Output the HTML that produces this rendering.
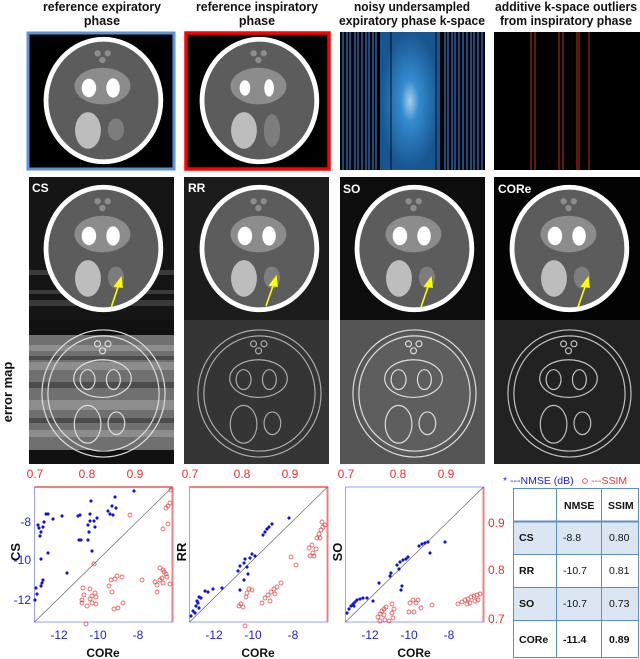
<!DOCTYPE html>
<html><head><meta charset="utf-8"><style>
html,body{margin:0;padding:0;background:#fff;}
svg{display:block;font-family:"Liberation Sans",sans-serif;}
</style></head><body>
<svg width="640" height="659" viewBox="0 0 640 659" xmlns="http://www.w3.org/2000/svg">
<defs>
<symbol id="ph" viewBox="0 0 147 141">
<ellipse cx="76" cy="70" rx="62" ry="66" fill="#fff"/>
<ellipse cx="76" cy="70" rx="57" ry="61" fill="#5c5c5c"/>
<ellipse cx="75" cy="55" rx="29" ry="19" fill="#8c8c8c"/>
<ellipse cx="61" cy="57" rx="7.5" ry="9.6" fill="#fff"/>
<ellipse cx="86" cy="57" rx="7" ry="10" fill="#fff"/>
<circle cx="70" cy="21" r="3.3" fill="#8c8c8c"/><circle cx="80.5" cy="21" r="3.3" fill="#8c8c8c"/><circle cx="75" cy="28" r="3.3" fill="#8c8c8c"/>
<ellipse cx="60" cy="101" rx="13.4" ry="19" fill="#bdbdbd"/>
<ellipse cx="89" cy="100" rx="8.4" ry="11.4" fill="#7d7d7d"/>
</symbol>
<symbol id="ph2" viewBox="0 0 147 141">
<ellipse cx="76" cy="70" rx="62" ry="66" fill="#fff"/>
<ellipse cx="76" cy="70" rx="57" ry="61" fill="#5c5c5c"/>
<ellipse cx="75" cy="55" rx="29" ry="19" fill="#8c8c8c"/>
<ellipse cx="61" cy="57" rx="5.5" ry="8" fill="#fff"/>
<ellipse cx="86" cy="57" rx="5" ry="9" fill="#fff"/>
<circle cx="70" cy="21" r="3.3" fill="#8c8c8c"/><circle cx="80.5" cy="21" r="3.3" fill="#8c8c8c"/><circle cx="75" cy="28" r="3.3" fill="#8c8c8c"/>
<ellipse cx="60" cy="101" rx="13.4" ry="19" fill="#bdbdbd"/>
<ellipse cx="89" cy="101" rx="8.4" ry="17" fill="#7d7d7d"/>
</symbol>
<symbol id="err" viewBox="0 0 147 141" fill="none" stroke="#ddd" stroke-width="1.2">
<ellipse cx="76" cy="72" rx="62" ry="64"/>
<ellipse cx="76" cy="72" rx="56" ry="58"/>
<ellipse cx="75" cy="57" rx="29" ry="19"/>
<ellipse cx="60" cy="58" rx="7.5" ry="10"/>
<ellipse cx="86" cy="58" rx="7" ry="10"/>
<circle cx="70" cy="22" r="3"/><circle cx="80.5" cy="22" r="3"/><circle cx="75" cy="29" r="3"/>
<ellipse cx="60" cy="103" rx="13.4" ry="19"/>
<ellipse cx="89" cy="102" rx="8.4" ry="11.4"/>
</symbol>
<radialGradient id="kc" cx="0.5" cy="0.5" r="0.5"><stop offset="0" stop-color="#bfe4ff"/><stop offset="0.3" stop-color="#3a9be8"/><stop offset="1" stop-color="#1a5fa0"/></radialGradient>
<path id="st" d="M-1.6 0H1.6M0 -1.6V1.6M-1.1 -1.1L1.1 1.1M-1.1 1.1L1.1 -1.1" stroke="#1010e0" stroke-width="1"/>
<circle id="ci" r="2" fill="none" stroke="#f03030" stroke-width="0.7"/>
</defs>

<g font-weight="bold" font-size="12.5" text-anchor="middle" fill="#111">
<text x="102" y="11" textLength="118" lengthAdjust="spacingAndGlyphs">reference expiratory</text>
<text x="102" y="25">phase</text>
<text x="257" y="11" textLength="122" lengthAdjust="spacingAndGlyphs">reference inspiratory</text>
<text x="257" y="25">phase</text>
<text x="412" y="11" textLength="116" lengthAdjust="spacingAndGlyphs">noisy undersampled</text>
<text x="412" y="25" textLength="146" lengthAdjust="spacingAndGlyphs">expiratory phase k-space</text>
<text x="566" y="11" textLength="142" lengthAdjust="spacingAndGlyphs">additive k-space outliers</text>
<text x="566" y="25" textLength="132" lengthAdjust="spacingAndGlyphs">from inspiratory phase</text>
</g>

<rect x="28" y="33" width="146" height="136" fill="#000" stroke="#5a93d8" stroke-width="3"/>
<use href="#ph" x="28" y="33" width="146" height="136"/>
<rect x="186" y="33" width="143" height="136" fill="#000" stroke="#f00" stroke-width="3.5"/>
<use href="#ph2" x="184" y="33" width="146" height="136"/>
<rect x="340" y="32" width="145" height="138" fill="#000"/>
<rect x="380" y="32" width="60" height="138" fill="url(#kc)" opacity="0.9"/>
<g stroke="#2a7fd0" stroke-width="1.2">
<line x1="343" y1="32" x2="343" y2="170"/><line x1="347" y1="32" x2="347" y2="170"/><line x1="350" y1="32" x2="350" y2="170"/><line x1="355" y1="32" x2="355" y2="170"/><line x1="358" y1="32" x2="358" y2="170"/><line x1="362" y1="32" x2="362" y2="170"/><line x1="366" y1="32" x2="366" y2="170"/><line x1="369" y1="32" x2="369" y2="170"/><line x1="373" y1="32" x2="373" y2="170"/><line x1="376" y1="32" x2="376" y2="170"/><line x1="445" y1="32" x2="445" y2="170"/><line x1="448" y1="32" x2="448" y2="170"/><line x1="452" y1="32" x2="452" y2="170"/><line x1="455" y1="32" x2="455" y2="170"/><line x1="459" y1="32" x2="459" y2="170"/><line x1="463" y1="32" x2="463" y2="170"/><line x1="467" y1="32" x2="467" y2="170"/><line x1="471" y1="32" x2="471" y2="170"/><line x1="474" y1="32" x2="474" y2="170"/><line x1="478" y1="32" x2="478" y2="170"/><line x1="482" y1="32" x2="482" y2="170"/>
</g>
<g stroke="#000" stroke-width="0.8"><line x1="391" y1="32" x2="391" y2="170"/><line x1="436" y1="32" x2="436" y2="170"/><line x1="441" y1="32" x2="441" y2="170"/><line x1="345" y1="32" x2="345" y2="170"/><line x1="465" y1="32" x2="465" y2="170"/></g>
<rect x="494" y="32" width="146" height="138" fill="#000"/>
<g stroke="#c0301c" stroke-width="1"><line x1="531" y1="32" x2="531" y2="170"/><line x1="535" y1="32" x2="535" y2="170"/><line x1="559" y1="32" x2="559" y2="170"/><line x1="563" y1="32" x2="563" y2="170"/><line x1="577" y1="32" x2="577" y2="170"/><line x1="579" y1="32" x2="579" y2="170"/><line x1="589" y1="32" x2="589" y2="170"/></g>

<rect x="29" y="177" width="145" height="143" fill="#151515"/>
<g fill="#3a3a3a"><rect x="29" y="270" width="145" height="5"/><rect x="29" y="290" width="145" height="4"/><rect x="29" y="300" width="145" height="6"/></g>
<use href="#ph" x="28" y="181" width="146" height="136"/>
<rect x="184" y="177" width="145" height="143" fill="#1c1c1c"/>
<use href="#ph" x="184" y="181" width="146" height="136"/>
<rect x="340" y="177" width="145" height="143" fill="#0e0e0e"/>
<use href="#ph" x="339" y="181" width="146" height="136"/>
<rect x="494" y="177" width="146" height="143" fill="#030303"/>
<use href="#ph" x="494" y="181" width="146" height="136"/>
<g font-weight="bold" font-size="12" fill="#fff">
<text x="32" y="192">CS</text><text x="188" y="192">RR</text><text x="343" y="193">SO</text><text x="498" y="193">CORe</text>
</g>
<g stroke="#ffff00" stroke-width="1.6" fill="#ffff00">
<line x1="111" y1="308" x2="119" y2="284"/><path d="M121 278 L115 286 L122 287Z"/>
<line x1="266" y1="306" x2="274" y2="283"/><path d="M276 277 L270 285 L277 286Z"/>
<line x1="421" y1="307" x2="429" y2="284"/><path d="M431 278 L425 286 L432 287Z"/>
<line x1="578" y1="307" x2="586" y2="284"/><path d="M588 278 L582 286 L589 287Z"/>
</g>

<rect x="29" y="320" width="145" height="144" fill="#111"/>
<rect x="29" y="335" width="145" height="115" fill="#707070"/>
<g fill="#9a9a9a" opacity="0.7"><rect x="29" y="345" width="145" height="6"/><rect x="29" y="362" width="145" height="8"/><rect x="29" y="400" width="145" height="10"/><rect x="29" y="430" width="145" height="7"/></g>
<g fill="#444" opacity="0.8"><rect x="29" y="356" width="145" height="4"/><rect x="29" y="382" width="145" height="6"/><rect x="29" y="418" width="145" height="5"/></g>
<use href="#err" x="28" y="322" width="146" height="140"/>
<rect x="184" y="320" width="145" height="144" fill="#353535"/>
<use href="#err" x="184" y="322" width="146" height="140" opacity="0.7"/>
<rect x="340" y="320" width="145" height="144" fill="#555"/>
<ellipse cx="414" cy="394" rx="57" ry="60" fill="#5e5e5e"/>
<use href="#err" x="339" y="322" width="146" height="140"/>
<rect x="494" y="320" width="146" height="144" fill="#222"/>
<use href="#err" x="494" y="322" width="146" height="140" opacity="0.85"/>
<text transform="translate(12,392) rotate(-90)" text-anchor="middle" font-size="13" font-weight="bold" fill="#111">error map</text>

<g font-size="12">
<rect x="34.5" y="487" width="138" height="135" fill="none" stroke="#9aa0ff" stroke-width="1"/>
<line x1="34.5" y1="487" x2="172.5" y2="487" stroke="#f08080" stroke-width="2"/>
<line x1="172.5" y1="487" x2="172.5" y2="622" stroke="#f08080" stroke-width="2"/>
<line x1="34.5" y1="622" x2="172.5" y2="487" stroke="#555" stroke-width="0.6"/>
<g fill="#f03030" text-anchor="middle"><text x="35" y="478">0.7</text><text x="87" y="478">0.8</text><text x="135" y="478">0.9</text></g>
<g fill="#2020e0" text-anchor="end"><text x="31" y="526">-8</text><text x="31" y="564">-10</text><text x="31" y="604">-12</text></g>
<g fill="#2020e0" text-anchor="middle"><text x="59" y="639">-12</text><text x="98" y="639">-10</text><text x="138" y="639">-8</text></g>
<text x="103" y="657" text-anchor="middle" font-weight="bold" fill="#111">CORe</text>
<text transform="translate(20,552) rotate(-90)" text-anchor="middle" font-weight="bold" font-size="13" fill="#111">CS</text>

<rect x="189.5" y="487" width="138" height="135" fill="none" stroke="#9aa0ff" stroke-width="1"/>
<line x1="189.5" y1="487" x2="327.5" y2="487" stroke="#f08080" stroke-width="2"/>
<line x1="327.5" y1="487" x2="327.5" y2="622" stroke="#f08080" stroke-width="2"/>
<line x1="189.5" y1="622" x2="327.5" y2="487" stroke="#555" stroke-width="0.6"/>
<g fill="#f03030" text-anchor="middle"><text x="190" y="478">0.7</text><text x="242" y="478">0.8</text><text x="290" y="478">0.9</text></g>
<g fill="#2020e0" text-anchor="middle"><text x="214" y="639">-12</text><text x="253" y="639">-10</text><text x="293" y="639">-8</text></g>
<text x="258" y="657" text-anchor="middle" font-weight="bold" fill="#111">CORe</text>
<text transform="translate(186,552) rotate(-90)" text-anchor="middle" font-weight="bold" font-size="13" fill="#111">RR</text>

<rect x="345.5" y="487" width="138" height="135" fill="none" stroke="#9aa0ff" stroke-width="1"/>
<line x1="483.5" y1="487" x2="483.5" y2="622" stroke="#f08080" stroke-width="2"/>
<line x1="345.5" y1="622" x2="483.5" y2="487" stroke="#555" stroke-width="0.6"/>
<g fill="#f03030" text-anchor="middle"><text x="346" y="478">0.7</text><text x="398" y="478">0.8</text><text x="446" y="478">0.9</text></g>
<g fill="#f03030"><text x="488" y="527">0.9</text><text x="488" y="574">0.8</text><text x="488" y="623">0.7</text></g>
<g fill="#2020e0" text-anchor="middle"><text x="370" y="639">-12</text><text x="409" y="639">-10</text><text x="449" y="639">-8</text></g>
<text x="414" y="657" text-anchor="middle" font-weight="bold" fill="#111">CORe</text>
<text transform="translate(342,552) rotate(-90)" text-anchor="middle" font-weight="bold" font-size="13" fill="#111">SO</text>
</g>

<g>
<use href="#st" x="39" y="528"/><use href="#st" x="41" y="532"/><use href="#st" x="43" y="527"/><use href="#st" x="40" y="536"/><use href="#st" x="44" y="522"/><use href="#st" x="38" y="525"/>
<use href="#st" x="36" y="588"/><use href="#st" x="37" y="594"/><use href="#st" x="35" y="600"/><use href="#st" x="42" y="583"/><use href="#st" x="43" y="580"/><use href="#st" x="41" y="586"/>
<use href="#st" x="46" y="514"/><use href="#st" x="48" y="514"/><use href="#st" x="53" y="519"/><use href="#st" x="62" y="516"/><use href="#st" x="41" y="559"/><use href="#st" x="48" y="553"/><use href="#st" x="67" y="573"/>
<use href="#st" x="78" y="516"/><use href="#st" x="80" y="515"/><use href="#st" x="90" y="514"/><use href="#st" x="91" y="501"/><use href="#st" x="88" y="525"/><use href="#st" x="90" y="521"/><use href="#st" x="94" y="521"/><use href="#st" x="97" y="518"/><use href="#st" x="89" y="532"/><use href="#st" x="88" y="540"/><use href="#st" x="79" y="540"/><use href="#st" x="81" y="540"/><use href="#st" x="92" y="551"/><use href="#st" x="95" y="527"/>
<use href="#st" x="108" y="511"/><use href="#st" x="110" y="514"/><use href="#st" x="112" y="506"/><use href="#st" x="113" y="515"/><use href="#st" x="116" y="508"/><use href="#st" x="115" y="497"/><use href="#st" x="134" y="491"/>
<use href="#ci" x="82" y="600"/><use href="#ci" x="84" y="595"/><use href="#ci" x="82" y="603"/><use href="#ci" x="90" y="599"/><use href="#ci" x="92" y="596"/><use href="#ci" x="96" y="597"/><use href="#ci" x="96" y="604"/><use href="#ci" x="92" y="603"/><use href="#ci" x="87" y="606"/><use href="#ci" x="83" y="588"/><use href="#ci" x="90" y="589"/><use href="#ci" x="95" y="593"/><use href="#ci" x="86" y="624"/>
<use href="#ci" x="111" y="580"/><use href="#ci" x="115" y="579"/><use href="#ci" x="117" y="576"/><use href="#ci" x="122" y="577"/><use href="#ci" x="123" y="603"/><use href="#ci" x="118" y="608"/><use href="#ci" x="114" y="609"/><use href="#ci" x="94" y="564"/><use href="#ci" x="109" y="586"/><use href="#ci" x="112" y="592"/><use href="#ci" x="142" y="580"/>
<use href="#ci" x="155" y="582"/><use href="#ci" x="157" y="585"/><use href="#ci" x="160" y="580"/><use href="#ci" x="162" y="578"/><use href="#ci" x="163" y="583"/><use href="#ci" x="167" y="577"/><use href="#ci" x="164" y="572"/><use href="#ci" x="166" y="574"/><use href="#ci" x="160" y="568"/><use href="#ci" x="163" y="570"/><use href="#ci" x="157" y="592"/><use href="#ci" x="170" y="584"/>
<use href="#ci" x="166" y="508"/><use href="#ci" x="168" y="506"/><use href="#ci" x="170" y="503"/><use href="#ci" x="168" y="524"/><use href="#ci" x="163" y="529"/><use href="#ci" x="171" y="490"/><use href="#ci" x="130" y="515"/>
</g>
<g>
<use href="#st" x="191" y="616"/><use href="#st" x="193" y="611"/><use href="#st" x="196" y="606"/><use href="#st" x="197" y="601"/><use href="#st" x="199" y="597"/><use href="#st" x="198" y="603"/><use href="#st" x="201" y="598"/><use href="#st" x="195" y="613"/><use href="#st" x="199" y="608"/><use href="#st" x="205" y="591"/><use href="#st" x="208" y="592"/><use href="#st" x="213" y="589"/><use href="#st" x="222" y="588"/>
<use href="#st" x="238" y="571"/><use href="#st" x="240" y="566"/><use href="#st" x="244" y="563"/><use href="#st" x="247" y="567"/><use href="#st" x="250" y="558"/><use href="#st" x="252" y="554"/><use href="#st" x="245" y="559"/><use href="#st" x="248" y="574"/><use href="#st" x="255" y="556"/><use href="#st" x="244" y="580"/><use href="#st" x="240" y="590"/>
<use href="#st" x="263" y="535"/><use href="#st" x="265" y="532"/><use href="#st" x="267" y="529"/><use href="#st" x="269" y="527"/><use href="#st" x="272" y="524"/><use href="#st" x="289" y="518"/>
<use href="#ci" x="239" y="606"/><use href="#ci" x="241" y="604"/><use href="#ci" x="243" y="607"/><use href="#ci" x="247" y="593"/><use href="#ci" x="249" y="589"/><use href="#ci" x="252" y="590"/><use href="#ci" x="246" y="597"/><use href="#ci" x="245" y="626"/>
<use href="#ci" x="262" y="603"/><use href="#ci" x="265" y="598"/><use href="#ci" x="268" y="595"/><use href="#ci" x="271" y="592"/><use href="#ci" x="274" y="589"/><use href="#ci" x="277" y="587"/><use href="#ci" x="270" y="601"/><use href="#ci" x="281" y="583"/><use href="#ci" x="275" y="594"/>
<use href="#ci" x="291" y="557"/><use href="#ci" x="296" y="565"/><use href="#ci" x="309" y="548"/><use href="#ci" x="312" y="545"/><use href="#ci" x="313" y="553"/><use href="#ci" x="316" y="549"/><use href="#ci" x="314" y="556"/><use href="#ci" x="310" y="556"/><use href="#ci" x="317" y="538"/><use href="#ci" x="319" y="534"/><use href="#ci" x="321" y="530"/><use href="#ci" x="323" y="527"/><use href="#ci" x="325" y="525"/><use href="#ci" x="322" y="522"/><use href="#ci" x="320" y="538"/>
</g>
<g>
<use href="#st" x="347" y="613"/><use href="#st" x="349" y="609"/><use href="#st" x="351" y="606"/><use href="#st" x="353" y="604"/><use href="#st" x="355" y="602"/><use href="#st" x="357" y="600"/><use href="#st" x="360" y="599"/><use href="#st" x="363" y="598"/><use href="#st" x="367" y="598"/><use href="#st" x="354" y="606"/><use href="#st" x="373" y="601"/>
<use href="#st" x="379" y="583"/><use href="#st" x="390" y="576"/><use href="#st" x="391" y="573"/><use href="#st" x="397" y="565"/><use href="#st" x="400" y="562"/><use href="#st" x="403" y="560"/><use href="#st" x="406" y="559"/><use href="#st" x="408" y="557"/><use href="#st" x="399" y="569"/><use href="#st" x="402" y="586"/><use href="#st" x="401" y="590"/>
<use href="#st" x="419" y="546"/><use href="#st" x="422" y="544"/><use href="#st" x="425" y="543"/><use href="#st" x="428" y="542"/><use href="#st" x="430" y="553"/><use href="#st" x="445" y="542"/>
<use href="#ci" x="378" y="617"/><use href="#ci" x="380" y="614"/><use href="#ci" x="382" y="611"/><use href="#ci" x="384" y="609"/><use href="#ci" x="386" y="607"/><use href="#ci" x="380" y="621"/><use href="#ci" x="385" y="620"/><use href="#ci" x="384" y="615"/><use href="#ci" x="392" y="604"/><use href="#ci" x="394" y="609"/><use href="#ci" x="392" y="613"/><use href="#ci" x="393" y="618"/><use href="#ci" x="389" y="621"/>
<use href="#ci" x="410" y="603"/><use href="#ci" x="413" y="600"/><use href="#ci" x="416" y="603"/><use href="#ci" x="418" y="600"/><use href="#ci" x="409" y="612"/><use href="#ci" x="414" y="612"/><use href="#ci" x="421" y="608"/><use href="#ci" x="432" y="605"/>
<use href="#ci" x="458" y="604"/><use href="#ci" x="462" y="602"/><use href="#ci" x="465" y="600"/><use href="#ci" x="468" y="599"/><use href="#ci" x="471" y="597"/><use href="#ci" x="474" y="596"/><use href="#ci" x="477" y="595"/><use href="#ci" x="480" y="594"/><use href="#ci" x="470" y="603"/><use href="#ci" x="475" y="601"/><use href="#ci" x="478" y="600"/><use href="#ci" x="467" y="604"/>
</g>

<text x="503" y="484" font-size="10.5" fill="#2020e0">* ---NMSE (dB)</text>
<circle cx="585" cy="481" r="2.3" fill="none" stroke="#f03030" stroke-width="0.8"/>
<text x="591" y="484" font-size="10.5" fill="#f03030">---SSIM</text>

<rect x="513" y="521" width="126" height="33" fill="#dce6f2"/>
<rect x="513" y="587" width="126" height="33" fill="#dce6f2"/>
<g stroke="#5b8fc9" fill="none" stroke-width="1">
<rect x="513.5" y="488.5" width="125" height="169"/>
<line x1="556.5" y1="488" x2="556.5" y2="658"/><line x1="601.5" y1="488" x2="601.5" y2="658"/>
<line x1="513" y1="521.5" x2="639" y2="521.5" stroke-width="2"/><line x1="513" y1="554.5" x2="639" y2="554.5"/><line x1="513" y1="587.5" x2="639" y2="587.5"/><line x1="513" y1="620.5" x2="639" y2="620.5"/>
</g>
<g font-size="10.5" fill="#111">
<text x="564" y="509" font-weight="bold">NMSE</text><text x="608" y="509" font-weight="bold">SSIM</text>
<text x="519" y="541" font-weight="bold">CS</text><text x="563" y="541">-8.8</text><text x="609" y="541">0.80</text>
<text x="519" y="574" font-weight="bold">RR</text><text x="563" y="574">-10.7</text><text x="609" y="574">0.81</text>
<text x="519" y="607" font-weight="bold">SO</text><text x="563" y="607">-10.7</text><text x="609" y="607">0.73</text>
<text x="519" y="643" font-weight="bold">CORe</text><text x="563" y="643" font-weight="bold">-11.4</text><text x="609" y="643" font-weight="bold">0.89</text>
</g>
</svg>
</body></html>
